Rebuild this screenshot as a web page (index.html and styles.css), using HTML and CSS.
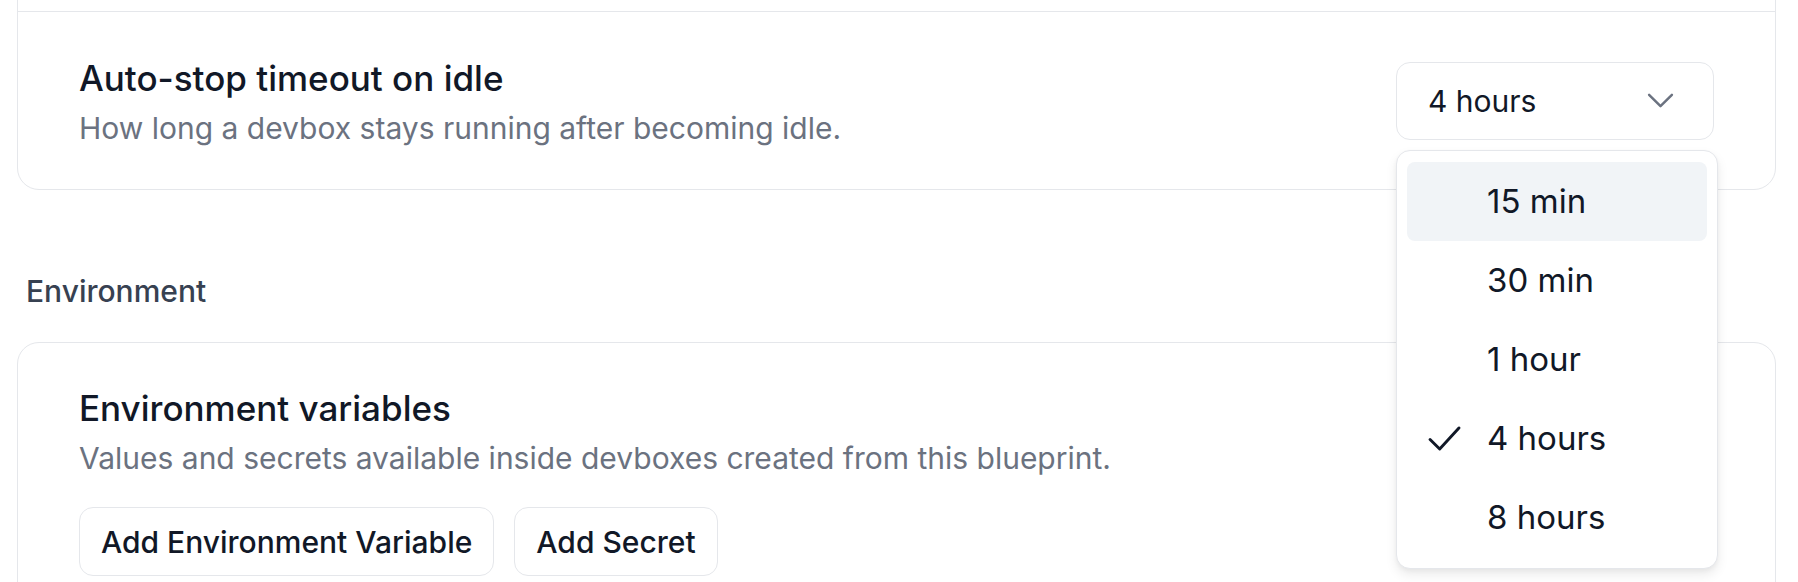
FILE: index.html
```html
<!DOCTYPE html>
<html lang="en">
<head>
<meta charset="UTF-8">
<title>Blueprint settings</title>
<link rel="stylesheet" href="styles.css">
</head>
<body>
<div class="page">
  <div class="card">
    <div class="row row-hidden"></div>
    <div class="row">
      <div class="row-text">
        <div class="row-title">Auto-stop timeout on idle</div>
        <div class="row-desc">How long a devbox stays running after becoming idle.</div>
      </div>
      <div class="select-wrap">
        <button class="select">
          <span>4 hours</span>
          <svg class="chevron" viewBox="5 7 14 10" width="27" height="19"><path d="M6 9l6 6 6-6" fill="none" stroke="currentColor" stroke-width="1.3" stroke-linecap="round" stroke-linejoin="round"/></svg>
        </button>
        <div class="menu">
          <div class="menu-item active"><span class="check"></span>15 min</div>
          <div class="menu-item"><span class="check"></span>30 min</div>
          <div class="menu-item"><span class="check"></span>1 hour</div>
          <div class="menu-item"><span class="check"><svg viewBox="3.5 5.5 17 13" width="33" height="25"><path d="M4.5 12.5l5 5 10-11" fill="none" stroke="currentColor" stroke-width="1.5" stroke-linecap="round" stroke-linejoin="round"/></svg></span>4 hours</div>
          <div class="menu-item"><span class="check"></span>8 hours</div>
        </div>
      </div>
    </div>
  </div>

  <div class="section-label">Environment</div>

  <div class="card">
    <div class="block">
      <div class="row-title">Environment variables</div>
      <div class="row-desc">Values and secrets available inside devboxes created from this blueprint.</div>
      <div class="buttons">
        <button class="btn">Add Environment Variable</button>
        <button class="btn">Add Secret</button>
      </div>
    </div>
  </div>
</div>
</body>
</html>
```

FILE: styles.css
```css
body {
  font-family: Inter, "Noto Sans", sans-serif;
  background-color: #ffffff;
  color: #111827;
  margin: 0;
  padding: 0;
  overflow: hidden;
}

.page {
  margin-top: -40px;
  padding: 0 22px 0 17px;
}

.card {
  border: 1px solid #e5e7eb;
  border-radius: 22px;
  background-color: #fff;
}

.row {
  display: flex;
  align-items: center;
  justify-content: space-between;
  padding: 0 61px;
  height: 177px;
  border-top: 1px solid #e5e7eb;
}

.row-hidden {
  height: 50px;
  border-top: none;
}

.row-title {
  font-size: 35px;
  font-weight: 500;
  line-height: 48px;
  color: #111827;
}

.row-desc {
  font-size: 30px;
  line-height: 44px;
  color: #6b7280;
  margin-top: 4px;
}

.row-text {
  padding-top: 2px;
}

.select-wrap {
  position: relative;
}

.select {
  display: flex;
  align-items: center;
  justify-content: space-between;
  width: 318px;
  height: 78px;
  padding: 0 39px 0 31px;
  box-sizing: border-box;
  border: 1px solid #e5e7eb;
  border-radius: 14px;
  background: #fff;
  font-family: inherit;
  font-size: 30px;
  color: #111827;
}

.chevron {
  color: #6b7280;
}

.menu {
  position: absolute;
  top: 88px;
  left: 0;
  width: 322px;
  box-sizing: border-box;
  padding: 11px 10px;
  background: #fff;
  border: 1px solid #e5e7eb;
  border-radius: 14px;
  box-shadow: 0 6px 12px rgba(0, 0, 0, 0.08), 0 2px 4px rgba(0, 0, 0, 0.04);
  z-index: 2;
}

.menu-item {
  display: flex;
  align-items: center;
  height: 79px;
  padding-left: 21px;
  border-radius: 8px;
  font-size: 33px;
  color: #111827;
}

.menu-item.active {
  background-color: #f1f4f7;
}

.check {
  display: flex;
  width: 59px;
  color: #111827;
}

.section-label {
  margin: 83px 0 0 9px;
  height: 69px;
  font-size: 30px;
  font-weight: 500;
  color: #374151;
}

.block {
  padding: 41px 61px 0;
  height: 260px;
}

.buttons {
  display: flex;
  gap: 20px;
  margin-top: 27px;
}

.btn {
  height: 69px;
  padding: 0 21px;
  border: 1px solid #e5e7eb;
  border-radius: 14px;
  background: #fff;
  font-family: inherit;
  font-size: 30px;
  font-weight: 500;
  color: #111827;
}
```
